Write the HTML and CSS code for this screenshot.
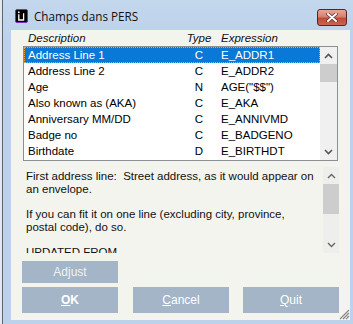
FILE: index.html
```html
<!DOCTYPE html>
<html lang="en">
<head>
  <meta charset="UTF-8">
  <title>Champs dans PERS</title>
  <link rel="stylesheet" href="styles.css">
</head>
<body>

<div class="window">
  <div class="titlebar">
    <svg class="app-icon" width="13" height="14" viewBox="0 0 13 14">
      <rect x="0.5" y="0.5" width="12" height="13" rx="1.5" fill="#000" stroke="#7a2fc0"/>
      <rect x="3" y="2.5" width="1.6" height="1.6" fill="#fff"/>
      <path d="M3.8 5.2 V11 H8.6 V4.2" fill="none" stroke="#fff" stroke-width="1.3"/>
    </svg>
    <span class="title">Champs dans PERS</span>
    <div class="close">
      <svg width="14" height="9" viewBox="0 0 14 9">
        <path d="M3 1 L11 8 M11 1 L3 8" stroke="#5a2a2a" stroke-width="3.4" stroke-linecap="round"/>
        <path d="M3 1 L11 8 M11 1 L3 8" stroke="#fff" stroke-width="2" stroke-linecap="round"/>
      </svg>
    </div>
  </div>

  <div class="client">
    <div class="cols header">
      <span class="c-desc">Description</span>
      <span class="c-type">Type</span>
      <span class="c-expr">Expression</span>
    </div>

    <div class="listbox">
      <div class="rows">
        <div class="cols row selected"><span class="c-desc">Address Line 1</span><span class="c-type">C</span><span class="c-expr">E_ADDR1</span></div>
        <div class="cols row"><span class="c-desc">Address Line 2</span><span class="c-type">C</span><span class="c-expr">E_ADDR2</span></div>
        <div class="cols row"><span class="c-desc">Age</span><span class="c-type">N</span><span class="c-expr">AGE("$$")</span></div>
        <div class="cols row"><span class="c-desc">Also known as (AKA)</span><span class="c-type">C</span><span class="c-expr">E_AKA</span></div>
        <div class="cols row"><span class="c-desc">Anniversary MM/DD</span><span class="c-type">C</span><span class="c-expr">E_ANNIVMD</span></div>
        <div class="cols row"><span class="c-desc">Badge no</span><span class="c-type">C</span><span class="c-expr">E_BADGENO</span></div>
        <div class="cols row"><span class="c-desc">Birthdate</span><span class="c-type">D</span><span class="c-expr">E_BIRTHDT</span></div>
      </div>
      <div class="vscroll list-scroll">
        <svg class="arrow" width="9" height="6" viewBox="0 0 9 6"><path d="M1 5 L4.5 1.5 L8 5" fill="none" stroke="#555" stroke-width="1.6"/></svg>
        <div class="thumb"></div>
        <div class="track"></div>
        <svg class="arrow" width="9" height="6" viewBox="0 0 9 6"><path d="M1 1 L4.5 4.5 L8 1" fill="none" stroke="#555" stroke-width="1.6"/></svg>
      </div>
    </div>

    <div class="desc">
      <div class="desc-text">
        First address line:&nbsp; Street address, as it would appear on an envelope.<br><br>
        If you can fit it on one line (excluding city, province, postal code), do so.<br><br>
        UPDATED FROM
      </div>
      <div class="vscroll desc-scroll">
        <svg class="arrow" width="9" height="6" viewBox="0 0 9 6"><path d="M1 5 L4.5 1.5 L8 5" fill="none" stroke="#666" stroke-width="1.4"/></svg>
        <div class="thumb"></div>
        <div class="track"></div>
        <svg class="arrow" width="9" height="6" viewBox="0 0 9 6"><path d="M1 1 L4.5 4.5 L8 1" fill="none" stroke="#666" stroke-width="1.4"/></svg>
      </div>
    </div>

    <div class="btn adjust">Adjust</div>
    <div class="btn-row">
      <div class="btn ok"><u>O</u>K</div>
      <div class="btn"><u>C</u>ancel</div>
      <div class="btn"><u>Q</u>uit</div>
    </div>

    <svg class="grip" width="12" height="12" viewBox="0 0 12 12">
      <path d="M11 2 L2 11 M11 5 L5 11 M11 8 L8 11" stroke="#8a8a8a" stroke-width="1.2"/>
    </svg>
  </div>
</div>

</body>
</html>
```

FILE: styles.css
```css
body {
  margin: 0;
  width: 353px;
  height: 324px;
  overflow: hidden;
  background: #e4e9ef;
  font-family: "Liberation Sans", Arial, sans-serif;
}

.window {
  margin-left: 2px;
  width: 351px;
  height: 324px;
  box-sizing: border-box;
  border-left: 1px solid #5d6670;
  padding: 0 3px 4px 8px;
  background: linear-gradient(#c3d7ed, #bcd2ea 40px, #bcd2ea);
}

.titlebar {
  height: 30px;
  display: flex;
  align-items: center;
  padding-left: 4px;
}

.app-icon {
  margin-top: 2px;
}

.title {
  margin-left: 6px;
  margin-top: 2px;
  font-family: "Open Sans", sans-serif;
  font-size: 11.7px;
  color: #111;
}

.close {
  margin-left: auto;
  margin-right: 3px;
  margin-top: 5px;
  width: 30px;
  height: 17px;
  box-sizing: border-box;
  border: 1px solid #5b2424;
  border-radius: 3px;
  background: linear-gradient(#e8a595, #d9806f 45%, #c24a37 55%, #c8654f);
  display: flex;
  align-items: center;
  justify-content: center;
}

.client {
  position: relative;
  height: 290px;
  background: #f4f4ef;
  padding-left: 11px;
  font-size: 11.5px;
  color: #000;
}

.cols {
  display: flex;
  height: 16px;
  line-height: 16px;
  white-space: nowrap;
}

.c-desc {
  width: 153px;
  padding-left: 4px;
}

.c-type {
  width: 36px;
  text-align: center;
}

.c-expr {
  padding-left: 4px;
}

.header {
  font-style: italic;
  color: #111;
  padding-left: 2px;
}

.listbox {
  margin-left: 1px;
  width: 315px;
  height: 115px;
  box-sizing: border-box;
  border: 1px solid #8c8f94;
  background: #fff;
  display: flex;
}

.rows {
  flex: 1;
}

.row.selected {
  background: #0a78d7;
  color: #fff;
  outline: 1px dotted #f2a640;
  outline-offset: -1px;
}

.vscroll {
  width: 17px;
  display: flex;
  flex-direction: column;
  align-items: center;
  background: #f0f0f0;
}

.vscroll .arrow {
  margin: 6px 0 5px;
}

.vscroll .thumb {
  width: 17px;
  background: #cdcdcd;
}

.vscroll .track {
  flex: 1;
}

.list-scroll .thumb {
  height: 18px;
}

.desc {
  margin: 6px 0 0 1px;
  width: 316px;
  height: 86px;
  display: flex;
}

.desc-text {
  flex: 1;
  overflow: hidden;
  padding: 3px 7px 0 3px;
  line-height: 12.7px;
  color: #111;
}

.desc-scroll {
  width: 16px;
  background: #eeeeec;
}

.desc-scroll .thumb {
  width: 16px;
  height: 30px;
}

.btn {
  width: 96px;
  height: 26px;
  background: #a3b5c7;
  color: #fff;
  font-size: 12px;
  display: flex;
  align-items: center;
  justify-content: center;
}

.adjust {
  margin-top: 8px;
  height: 22px;
  color: #eef2f6;
}

.btn-row {
  display: flex;
  gap: 15px;
  margin-top: 4px;
}

.btn-row .btn:last-child {
  margin-left: -1px;
}

.ok {
  font-weight: bold;
}

.grip {
  position: absolute;
  right: 0;
  bottom: 0;
}
```
